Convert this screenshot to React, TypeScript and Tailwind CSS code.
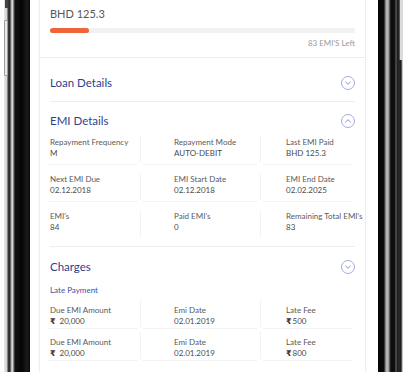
import React from 'react';

const font = { fontFamily: 'Lato, "Open Sans", sans-serif' };

function CircleChevron({ up = false }: { up?: boolean }) {
  return (
    <svg width="14" height="14" viewBox="0 0 14 14" fill="none" className="shrink-0">
      <circle cx="7" cy="7" r="6.5" stroke="#9aa1d9" strokeWidth="0.9" />
      {up ? (
        <path d="M4.6 8 L7 5.7 L9.4 8" stroke="#7d86cc" strokeWidth="0.9" strokeLinecap="round" strokeLinejoin="round" />
      ) : (
        <path d="M4.6 6 L7 8.3 L9.4 6" stroke="#7d86cc" strokeWidth="0.9" strokeLinecap="round" strokeLinejoin="round" />
      )}
    </svg>
  );
}

type Cell = { label: string; value: React.ReactNode };

// 3 column grid with thin separators between columns
function InfoGrid({ rows, kind, lined }: { rows: Cell[][]; kind: 'emi' | 'charge'; lined: boolean[] }) {
  return (
    <div className={'-ml-[3px] grid grid-cols-[91px_5px_114px_6px_89px] ' + (kind === 'emi' ? 'gap-y-[6px]' : 'gap-y-[1px]')}>
      {rows.map((row, r) => (
        <React.Fragment key={r}>
          {row.map((cell, c) => (
            <React.Fragment key={c}>
              {c > 0 && (
                <div className="flex justify-center py-[2px]">
                  <div className="w-px bg-[#f3f3f3]" />
                </div>
              )}
              <div
                className={
                  (kind === 'emi' ? 'h-[31px] pt-[3px] ' : 'h-[31px] pt-[7px] ') +
                  (lined[r] ? 'border-b border-[#f3f3f3] ' : '') +
                  (c === 0 ? 'pl-[3px]' : c === 1 ? 'pl-[31px]' : 'pl-[23px]')
                }
              >
                <div className="whitespace-nowrap text-[8px] leading-[11px] text-[#5a5a5a]">{cell.label}</div>
                <div className="whitespace-nowrap text-[8px] leading-[11px] text-[#4a4a4a]">{cell.value}</div>
              </div>
            </React.Fragment>
          ))}
        </React.Fragment>
      ))}
    </div>
  );
}

function Rupee({ amount, tight }: { amount: string; tight?: boolean }) {
  return (
    <span className="flex items-center">
      <span
        className={'text-[8px] font-bold text-[#333] ' + (tight ? 'mr-[1px]' : 'mr-[4px]')}
        style={{ fontFamily: '"DejaVu Sans", sans-serif' }}
      >
        ₹
      </span>
      <span>{amount}</span>
    </span>
  );
}

export default function App() {
  const emiRows: Cell[][] = [
    [
      { label: 'Repayment Frequency', value: 'M' },
      { label: 'Repayment Mode', value: 'AUTO-DEBIT' },
      { label: 'Last EMI Paid', value: 'BHD 125.3' },
    ],
    [
      { label: 'Next EMI Due', value: '02.12.2018' },
      { label: 'EMI Start Date', value: '02.12.2018' },
      { label: 'EMI End Date', value: '02.02.2025' },
    ],
    [
      { label: "EMI's", value: '84' },
      { label: "Paid EMI's", value: '0' },
      { label: "Remaining Total EMI's", value: '83' },
    ],
  ];

  const chargeRows: Cell[][] = [
    [
      { label: 'Due EMI Amount', value: <Rupee amount="20,000" /> },
      { label: 'Emi Date', value: '02.01.2019' },
      { label: 'Late Fee', value: <Rupee amount="500" tight /> },
    ],
    [
      { label: 'Due EMI Amount', value: <Rupee amount="20,000" /> },
      { label: 'Emi Date', value: '02.01.2019' },
      { label: 'Late Fee', value: <Rupee amount="800" tight /> },
    ],
  ];

  return (
    <div className="flex h-[372px] w-[407px] overflow-hidden bg-white" style={font}>
      {/* left phone edge */}
      <div className="relative w-[30px] shrink-0 bg-[linear-gradient(to_right,#ffffff_0px,#ffffff_4px,#e8e8e8_4px,#cfcfcf_7px,#3a3a3a_8px,#2a2a2a_10px,#a5a5a5_11px,#d8d8d8_12.5px,#5a5a5a_14px,#111111_15px,#050505_22px,#1c1c1c_27px,#0a0a0a_30px)]">
        <div className="absolute left-[4px] top-[20px] h-[56px] w-[4px] rounded-[1px] border border-[#9a9a9a] bg-[#e9e9e9]" />
        <div className="absolute left-[5px] top-0 h-[8px] w-[3px] bg-[#444]" />
      </div>

      {/* screen */}
      <div className="flex-1 bg-white pl-[9px] pr-[12px]">
        <div className="h-full border-x border-[#eeeeee] bg-white shadow-[0_0_3px_rgba(0,0,0,0.04)]">
          {/* balance */}
          <div className="border-b border-[#eeeeee] px-[10px] pb-[9px] pt-[6px]">
            <div className="text-[11px] leading-[16px] text-[#555]">BHD 125.3</div>
            <div className="mt-[6px] h-[5px] rounded-full bg-[#f1f1f1]">
              <div className="h-full w-[39px] rounded-full bg-[#f0643a]" />
            </div>
            <div className="mt-[5px] text-right text-[8px] leading-[10px] text-[#9a9a9a]">83 EMI'S Left</div>
          </div>

          <div className="px-[10px]">
            {/* loan details */}
            <div className="flex items-center justify-between border-b border-[#eeeeee] pb-[10px] pt-[17px]">
              <div className="text-[11.5px] leading-[16px] text-[#2e3f8f]">Loan Details</div>
              <CircleChevron />
            </div>

            {/* emi details */}
            <div className="border-b border-[#eeeeee] pb-[7px] pt-[11px]">
              <div className="flex items-center justify-between">
                <div className="text-[11.5px] leading-[16px] text-[#2e3f8f]">EMI Details</div>
                <CircleChevron up />
              </div>
              <div className="mt-[5px]">
                <InfoGrid rows={emiRows} kind="emi" lined={[true, true, false]} />
              </div>
            </div>

            {/* charges */}
            <div className="pt-[12px]">
              <div className="flex items-center justify-between">
                <div className="text-[11.5px] leading-[16px] text-[#2e3f8f]">Charges</div>
                <CircleChevron />
              </div>
              <div className="mt-[9px] text-[8px] leading-[12px] text-[#3d52a3]">Late Payment</div>
              <div className="mt-[2px]">
                <InfoGrid rows={chargeRows} kind="charge" lined={[true, true]} />
              </div>
            </div>
          </div>
        </div>
      </div>

      {/* right phone edge */}
      <div className="relative w-[29px] shrink-0 bg-[linear-gradient(to_right,#050505_0px,#0a0a0a_6px,#6a6a6a_7px,#c8c8c8_9px,#8a8a8a_11px,#3a3a3a_12px,#0a0a0a_13px,#111111_17px,#707070_18px,#1a1a1a_19px,#2a2a2a_21px,#1a1a1a_23px,#ffffff_25px,#ffffff_29px)]">
        <div className="absolute left-[21px] top-0 h-[60px] w-[4px] border-l border-[#555] bg-[#dcdcdc]" />
      </div>
    </div>
  );
}
